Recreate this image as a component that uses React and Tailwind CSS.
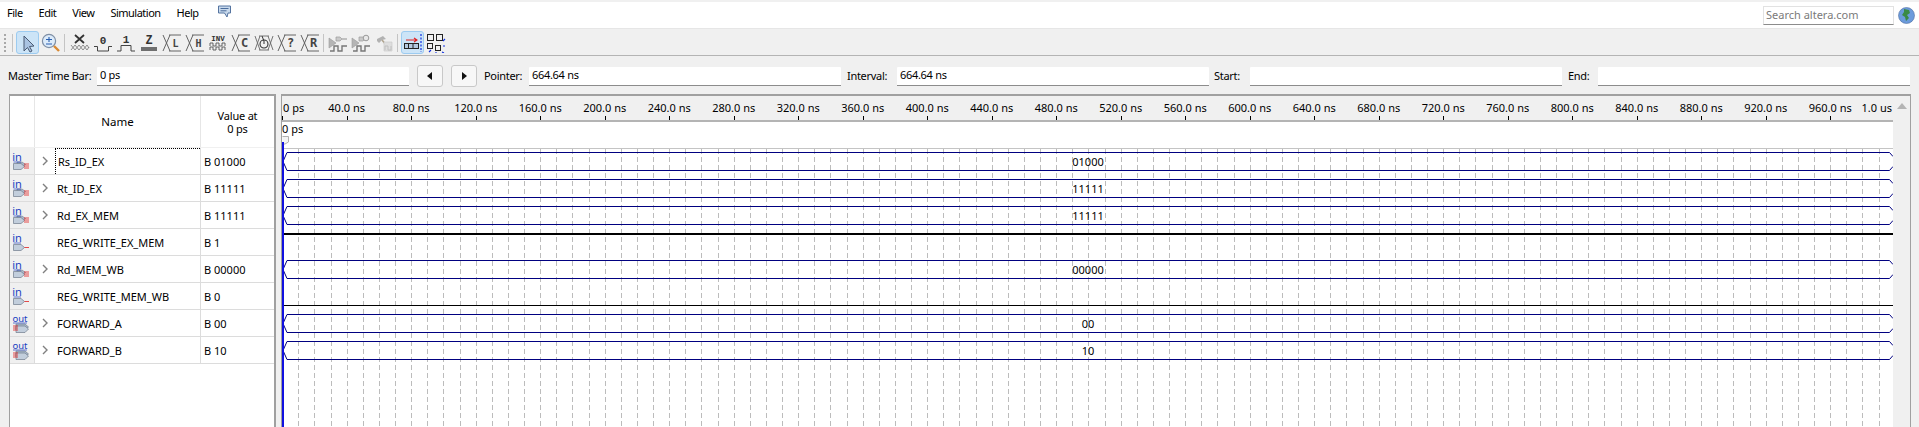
import React from "react";

const FONT = "font-['Noto_Sans','Liberation_Sans',sans-serif]";

function Glyph({ children }) {
  return (
    <svg width="20" height="20" viewBox="0 0 20 20" fill="none" className="shrink-0">
      {children}
    </svg>
  );
}

function ToolBtn({ active, children }) {
  return (
    <div className={`w-[23px] h-[23px] flex items-center justify-center rounded-[3px] border ${active ? "bg-[#cce4f7] border-[#9ccbf0]" : "border-transparent"}`}>
      {children}
    </div>
  );
}

const Sep = ({ cls }) => <div className={`w-px h-[18px] bg-[#c4c4c4] ${cls}`} />;

function XLetter({ c, size = 10 }) {
  return (
    <Glyph>
      <path d="M1 2 L8 18 M1 18 L8 2 M7 2 H19 M7 18 H19" stroke="#555" strokeWidth="0.9" />
      <text x="13.5" y="14" textAnchor="middle" fontSize={size} fontWeight="700" fontFamily="'DejaVu Sans Mono','Liberation Mono',monospace" fill="#444">{c}</text>
    </Glyph>
  );
}

function Cursor() {
  return (
    <Glyph>
      <path d="M6 3 L6 18 L9.5 14.5 L12 19 L14 18 L11.5 13.5 L16 13 Z" fill="#a9c3e2" stroke="#4a5a72" strokeWidth="1" />
    </Glyph>
  );
}
function Magnifier() {
  return (
    <Glyph>
      <circle cx="8" cy="8" r="6.6" fill="#dcebfa" stroke="#7f8fa5" strokeWidth="1.2" />
      <path d="M5 6.5 H11 M8 4 V9 M5 11 H11" stroke="#2a5fb0" strokeWidth="1.1" />
      <path d="M13 13 L18 18" stroke="#d98a34" strokeWidth="2.4" />
    </Glyph>
  );
}
function XForce() {
  return (
    <Glyph>
      <path d="M5 2 L14 10 M14 2 L5 10" stroke="#333" strokeWidth="1.8" />
      <path d="M1 12 L5 17 L9 12 L13 17 L17 12 L19 15 M1 17 L5 12 L9 17 L13 12 L17 17 L19 14" stroke="#777" strokeWidth="0.8" />
    </Glyph>
  );
}
function Zero() {
  return (
    <Glyph>
      <text x="10" y="11" textAnchor="middle" fontSize="11" fontWeight="700" fontFamily="'Liberation Mono',monospace" fill="#333">0</text>
      <path d="M1 13.5 H4.5 V18 H15.5 V13.5 H19" stroke="#444" strokeWidth="1" />
    </Glyph>
  );
}
function One() {
  return (
    <Glyph>
      <text x="10" y="10" textAnchor="middle" fontSize="11" fontWeight="700" fontFamily="'Liberation Mono',monospace" fill="#333">1</text>
      <path d="M1 18 H5 V12.5 H15 V18 H19" stroke="#444" strokeWidth="1" />
    </Glyph>
  );
}
function ZIcon() {
  return (
    <Glyph>
      <text x="10" y="11" textAnchor="middle" fontSize="12" fontWeight="700" fontFamily="'Liberation Mono',monospace" fill="#333">Z</text>
      <rect x="2" y="14" width="16" height="4" fill="#6f6f6f" />
    </Glyph>
  );
}
function Inv() {
  return (
    <Glyph>
      <text x="10" y="8" textAnchor="middle" fontSize="7.5" fontWeight="700" fontFamily="'Liberation Mono',monospace" fill="#333">INV</text>
      <path d="M2 13 V10 H5 V13 H8 V10 H11 V13 H14 V10 H17 V13 M2 17 V14 H5 V17 H8 V14 H11 V17 H14 V14 H17 V17" stroke="#555" strokeWidth="0.9" />
    </Glyph>
  );
}
function Clock() {
  return (
    <Glyph>
      <path d="M1 3 L6 17 M1 17 L6 3 M14 3 L19 17 M14 17 L19 3 M5 3 H15 M5 17 H15" stroke="#666" strokeWidth="0.9" />
      <circle cx="10" cy="11" r="4" stroke="#333" strokeWidth="1.1" fill="#f0f0f0" />
      <path d="M8 3 L10 8 M10 11 V8" stroke="#333" strokeWidth="1" />
    </Glyph>
  );
}
function Plug({ clock }) {
  return (
    <Glyph>
      <path d="M1 5 L1 15 L8 10 Z" fill="#b5b5b5" stroke="#9a9a9a" strokeWidth="0.6" />
      <path d="M8 4 H12 L14 6 L12 8 H8 Z" fill="#c9c9c9" stroke="#9b9b9b" strokeWidth="0.7" />
      {clock ? <circle cx="15" cy="5" r="2.8" stroke="#9a9a9a" fill="#e8e8e8" /> : <path d="M14 6 H19" stroke="#a0a0a0" strokeWidth="1.2" />}
      <path d="M2 18 H6 V13 H10 V18 H14 V13 H19" stroke="#777" strokeWidth="1.4" />
    </Glyph>
  );
}
function Hammer() {
  return (
    <Glyph>
      <path d="M3 6 L9 3 L12 6 L8 7 L5 10 L3 8 Z" fill="#b2b2b2" />
      <path d="M8 7 L13 13" stroke="#b0a58f" strokeWidth="1.6" />
      <path d="M10 9 H18 V18 H10 Z" fill="#dedede" stroke="#c6c6c6" strokeWidth="0.6" />
      <path d="M11 17 V13 H14 V17 H17 V13" stroke="#c0c0c0" />
    </Glyph>
  );
}
function Snap() {
  return (
    <Glyph>
      <path d="M3 7 H14 M11 5 L14 7 L11 9" stroke="#e02020" strokeWidth="1.1" />
      <rect x="1.5" y="10.5" width="14" height="5" fill="#b4c9df" stroke="#222" strokeWidth="1" />
      <path d="M5.5 11 V15 M10 11 V15" stroke="#222" strokeWidth="1" />
      <path d="M18 1 V19" stroke="#1030e0" strokeWidth="1.2" strokeDasharray="2 1.5" />
    </Glyph>
  );
}
function GridSnap() {
  return (
    <Glyph>
      <rect x="1.5" y="1.5" width="6" height="6" stroke="#222" />
      <rect x="10.5" y="1.5" width="6" height="6" stroke="#222" />
      <rect x="1.5" y="10.5" width="5" height="5" stroke="#222" />
      <rect x="9.5" y="12.5" width="5" height="5" stroke="#222" />
      <path d="M19 6 L17 8 M3 19 L5 17 M19 13 H17 M10 20 V19 M16 19 L18 20" stroke="#1030e0" strokeWidth="1.1" />
    </Glyph>
  );
}

function Field({ value, w }) {
  return (
    <div className={`${w} h-[19px] bg-white border-b border-[#8c8c8c] flex items-center pl-[3px] text-[11px] tracking-[-0.3px] text-black rounded-t-[1px] shrink-0`}>
      {value}
    </div>
  );
}

function Arrow({ dir }) {
  return (
    <div className="w-[26px] h-[22px] bg-[#f7f7f7] border border-[#c8c8c8] rounded-[3px] flex items-center justify-center shrink-0">
      <svg width="6" height="8" viewBox="0 0 6 8">
        <path d={dir === "l" ? "M5 0 V8 L0 4 Z" : "M1 0 V8 L6 4 Z"} fill="#111" />
      </svg>
    </div>
  );
}

function PinIcon({ kind, bus }) {
  const out = kind === "out";
  return (
    <svg width="24" height="26" viewBox="0 0 24 26" className="block shrink-0">
      {out ? (
        <>
          <path d="M6 14 H15 L18.5 17 L15 20 H6 Z" fill="#a9b8cb" stroke="#6f7b8b" strokeWidth="0.7" />
          <path d="M6 16 H15 L18.5 19 L15 22.5 H6 Z" fill="#c2cedc" stroke="#6f7b8b" strokeWidth="0.7" />
          <path d="M3 16 H8 M3 18 H8 M3 20 H8" stroke="#e02020" strokeWidth="0.8" />
          <text x="10" y="12" textAnchor="middle" fontSize="9.5" fontFamily="'Noto Sans',sans-serif" fill="#2040c0">out</text>
          <path d="M3 13 H17" stroke="#2040c0" strokeWidth="0.7" />
        </>
      ) : (
        <>
          {bus && <path d="M7 14 H12 L15.5 16.5 L12 19 H7 Z" fill="#a9b8cb" stroke="#6f7b8b" strokeWidth="0.6" />}
          <path d="M3.5 15.5 H11 L14.5 18.5 L11 21.5 H3.5 Z" fill="#c2cedc" stroke="#6f7b8b" strokeWidth="0.7" />
          {bus ? (
            <path d="M14 16 H19 M14 18 H19 M14 20 H19" stroke="#e02020" strokeWidth="0.8" />
          ) : (
            <path d="M14.5 18.5 H19" stroke="#e02020" strokeWidth="0.8" />
          )}
          <text x="7" y="12.5" textAnchor="middle" fontSize="11" fontFamily="'Noto Sans',sans-serif" fill="#2040c0">in</text>
          <path d="M3.5 14 H11" stroke="#2040c0" strokeWidth="0.7" />
        </>
      )}
    </svg>
  );
}

const signals = [
  { name: "Rs_ID_EX", kind: "in", bus: true, value: "B 01000", wave: "01000", focus: true },
  { name: "Rt_ID_EX", kind: "in", bus: true, value: "B 11111", wave: "11111" },
  { name: "Rd_EX_MEM", kind: "in", bus: true, value: "B 11111", wave: "11111" },
  { name: "REG_WRITE_EX_MEM", kind: "in", value: "B 1", level: 1 },
  { name: "Rd_MEM_WB", kind: "in", bus: true, value: "B 00000", wave: "00000" },
  { name: "REG_WRITE_MEM_WB", kind: "in", value: "B 0", level: 0 },
  { name: "FORWARD_A", kind: "out", bus: true, value: "B 00", wave: "00" },
  { name: "FORWARD_B", kind: "out", bus: true, value: "B 10", wave: "10" },
];

function SignalRow({ s }) {
  return (
    <div className="grid grid-cols-[25px_166px_1fr] h-[27px] border-b border-[#dcdcdc]">
      <div className="bg-[#f0f0f0] border-r border-[#dcdcdc]">
        <PinIcon kind={s.kind} bus={s.bus} />
      </div>
      <div className="relative flex items-center border-r border-[#dcdcdc]">
        {s.bus && (
          <svg width="6" height="10" viewBox="0 0 6 10" className="absolute left-[7px] top-[8px]">
            <path d="M1 1 L5 5 L1 9" stroke="#808080" strokeWidth="1.4" fill="none" />
          </svg>
        )}
        <span className={`ml-[20px] pl-[2px] h-full flex-1 flex items-center pt-[2px] ${s.focus ? "border-t border-l border-dotted border-black" : ""}`}>
          {s.name}
        </span>
      </div>
      <div className="flex items-center pl-[3px] pt-[2px]">{s.value}</div>
    </div>
  );
}

const X0 = 0.2;
const PITCH = 64.5;
const LABELS = Array.from({ length: 25 }, (_, i) => (i === 0 ? "0 ps" : `${i * 40}.0 ns`));
const GRID = Array.from({ length: 99 }, (_, i) => X0 + (i + 1) * (PITCH / 4));

function Ruler() {
  return (
    <svg width="1611" height="24" className="block shrink-0" fontFamily="'Noto Sans',sans-serif" fontSize="11" fill="#000">
      {LABELS.map((l, i) => (
        <text key={l} x={i === 0 ? 1 : X0 + i * PITCH} y="16" textAnchor={i === 0 ? "start" : "middle"}>{l}</text>
      ))}
      <text x="1610" y="16" textAnchor="end">1.0 us</text>
      {LABELS.map((l, i) => (
        <path key={l} d={`M${Math.round(X0 + i * PITCH) + 0.5} 20 V24`} stroke="#000" />
      ))}
    </svg>
  );
}

function TimeBar() {
  return (
    <div className="h-[26px] shrink-0 flex flex-col">
      <span className="h-[13px] leading-[13px]">0 ps</span>
      <svg width="10" height="13" className="block shrink-0">
        <path d="M0.5 1.5 H6.5 V7 L3 9 H0.5" stroke="#b0b0b0" fill="#f4f4f4" />
        <path d="M1 7 V13" stroke="#1010e0" strokeWidth="2" />
      </svg>
    </div>
  );
}

function Waves() {
  const height = 279;
  const bus = "#000080";
  return (
    <svg width="1611" height={height} className="block" fontFamily="'Noto Sans',sans-serif" fontSize="11" fill="#000">
      <path d="M0 0.5 H1611" stroke="#c4c4c4" />
      {GRID.map((x, i) => (
        <path key={i} d={`M${Math.round(x) + 0.5} 1 V${height}`} stroke="#bcbcbc" strokeDasharray="5 3" />
      ))}
      {signals.map((s, i) => {
        const top = 4.5 + i * 27;
        const bot = top + 18;
        const mid = top + 9;
        if (s.wave) {
          return (
            <g key={s.name}>
              <path d={`M5 ${top} H1607.5 L1611 ${top + 4} M1611 ${bot - 4} L1607.5 ${bot} H5 L1 ${mid} L5 ${top}`} stroke={bus} fill="none" />
              <text x="806" y={mid + 4} textAnchor="middle">{s.wave}</text>
            </g>
          );
        }
        return s.level ? (
          <rect key={s.name} x="0" y={85} width="1611" height="2" fill="#000" />
        ) : (
          <rect key={s.name} x="0" y={157} width="1611" height="1" fill="#000" />
        );
      })}
      <rect x="0" y="0" width="2" height={height} fill="#1010e0" />
    </svg>
  );
}

export default function App() {
  return (
    <div className={`w-[1919px] h-[427px] flex flex-col overflow-hidden bg-[#f0f0f0] text-[11px] text-black ${FONT}`}>
      {/* menu bar */}
      <div className="h-[29px] shrink-0 bg-white border-t-2 border-[#f0f0f0] border-b border-b-[#e6e6e6] flex items-center text-[11px]">
        <div className="flex items-center pl-[7px] gap-[16px] -mt-[3px] tracking-[-0.5px]">
          <span>File</span>
          <span>Edit</span>
          <span>View</span>
          <span>Simulation</span>
          <span>Help</span>
        </div>
        <svg width="15" height="14" viewBox="0 0 15 14" className="ml-[18px] -mt-[6px]">
          <path d="M1.5 1 H13.5 V8 H11 L10 12 L7.5 8 H1.5 Z" fill="#c8d9ec" stroke="#5574a0" />
          <path d="M3.5 3.5 H11.5 M3.5 5.8 H9.5" stroke="#4a6c9c" />
        </svg>
        <div className="ml-auto flex items-center gap-[4px] pr-[4px]">
          <div className="w-[131px] h-[19px] bg-white border border-[#e2e2e2] border-b-[#8c8c8c] flex items-center pl-[2px] text-[#7a7a7a]">Search altera.com</div>
          <svg width="17" height="17" viewBox="0 0 17 17">
            <circle cx="8.5" cy="8.5" r="8" fill="#6c9bdc" stroke="#4f6f9f" strokeWidth="0.6" />
            <path d="M6 2 L11 3 L12 6 L9 8 L11 11 L8 14 L7 10 L4 8 L6 5 Z" fill="#3a8a45" />
          </svg>
        </div>
      </div>

      {/* toolbar */}
      <div className="h-[27px] shrink-0 flex items-center pt-[1px] border-b border-[#b4b4b4]">
        <div className="w-[2px] h-[18px] ml-[4px] border-l-2 border-dotted border-[#a8a8a8]" />
        <Sep cls="ml-[6px]" />
        <div className="ml-[3px] flex items-center">
          <ToolBtn active><Cursor /></ToolBtn>
          <ToolBtn><Magnifier /></ToolBtn>
        </div>
        <Sep cls="ml-[2px]" />
        <div className="ml-[3px] flex items-center">
          <ToolBtn><XForce /></ToolBtn>
          <ToolBtn><Zero /></ToolBtn>
          <ToolBtn><One /></ToolBtn>
          <ToolBtn><ZIcon /></ToolBtn>
          <ToolBtn><XLetter c="L" /></ToolBtn>
          <ToolBtn><XLetter c="H" /></ToolBtn>
          <ToolBtn><Inv /></ToolBtn>
          <ToolBtn><XLetter c="C" size={12} /></ToolBtn>
          <ToolBtn><Clock /></ToolBtn>
          <ToolBtn><XLetter c="?" size={12} /></ToolBtn>
          <ToolBtn><XLetter c="R" size={12} /></ToolBtn>
        </div>
        <Sep cls="ml-[2px]" />
        <div className="ml-[2px] flex items-center">
          <ToolBtn><Plug /></ToolBtn>
          <ToolBtn><Plug clock /></ToolBtn>
          <ToolBtn><Hammer /></ToolBtn>
        </div>
        <Sep cls="ml-[2px]" />
        <div className="ml-[3px] flex items-center">
          <ToolBtn active><Snap /></ToolBtn>
          <ToolBtn><GridSnap /></ToolBtn>
        </div>
      </div>

      {/* time fields */}
      <div className="h-[38px] shrink-0 flex items-center pl-[8px] pt-[2px]">
        <span className="w-[89px] shrink-0 tracking-[-0.3px]">Master Time Bar:</span>
        <Field value="0 ps" w="w-[312px]" />
        <div className="flex items-center gap-[8px] ml-[8px] mr-[7px]">
          <Arrow dir="l" />
          <Arrow dir="r" />
        </div>
        <span className="w-[45px] shrink-0 tracking-[-0.3px]">Pointer:</span>
        <Field value="664.64 ns" w="w-[312px]" />
        <span className="w-[56px] pl-[6px] shrink-0 tracking-[-0.3px]">Interval:</span>
        <Field value="664.64 ns" w="w-[312px]" />
        <span className="w-[41px] pl-[5px] shrink-0 tracking-[-0.3px]">Start:</span>
        <Field value="" w="w-[312px]" />
        <span className="w-[36px] pl-[6px] shrink-0 tracking-[-0.3px]">End:</span>
        <Field value="" w="w-[312px]" />
      </div>

      {/* main */}
      <div className="flex-1 min-h-0 flex pl-[9px]">
        <div className="w-[267px] shrink-0 bg-white border-2 border-b-0 border-[#a0a0a0] border-l border-r-2">
          <div className="grid grid-cols-[25px_166px_1fr] h-[52px] border-b border-[#f0f0f0]">
            <div className="border-r border-[#e6e6e6]" />
            <div className="border-r border-[#e6e6e6] flex items-center justify-center text-[11.5px]">Name</div>
            <div className="flex flex-col items-center justify-center leading-[13px] tracking-[-0.2px]">
              <span>Value at</span>
              <span>0 ps</span>
            </div>
          </div>
          {signals.map((s) => (
            <SignalRow key={s.name} s={s} />
          ))}
        </div>

        <div className="ml-[5px] flex-1 flex border-2 border-b-0 border-[#a0a0a0] border-l border-r mr-[8px] bg-white min-w-0">
          <div className="w-[1611px] shrink-0 flex flex-col">
            <div className="bg-[#f0f0f0] border-b-2 border-[#b4b4b4] shrink-0">
              <Ruler />
            </div>
            <TimeBar />
            <Waves />
          </div>
          <div className="flex-1 bg-[#f0f0f0] flex justify-center pt-[7px]">
            <svg width="10" height="6" viewBox="0 0 10 6"><path d="M0 6 L5 0 L10 6 Z" fill="#b4b4b4" /></svg>
          </div>
        </div>
      </div>
    </div>
  );
}
